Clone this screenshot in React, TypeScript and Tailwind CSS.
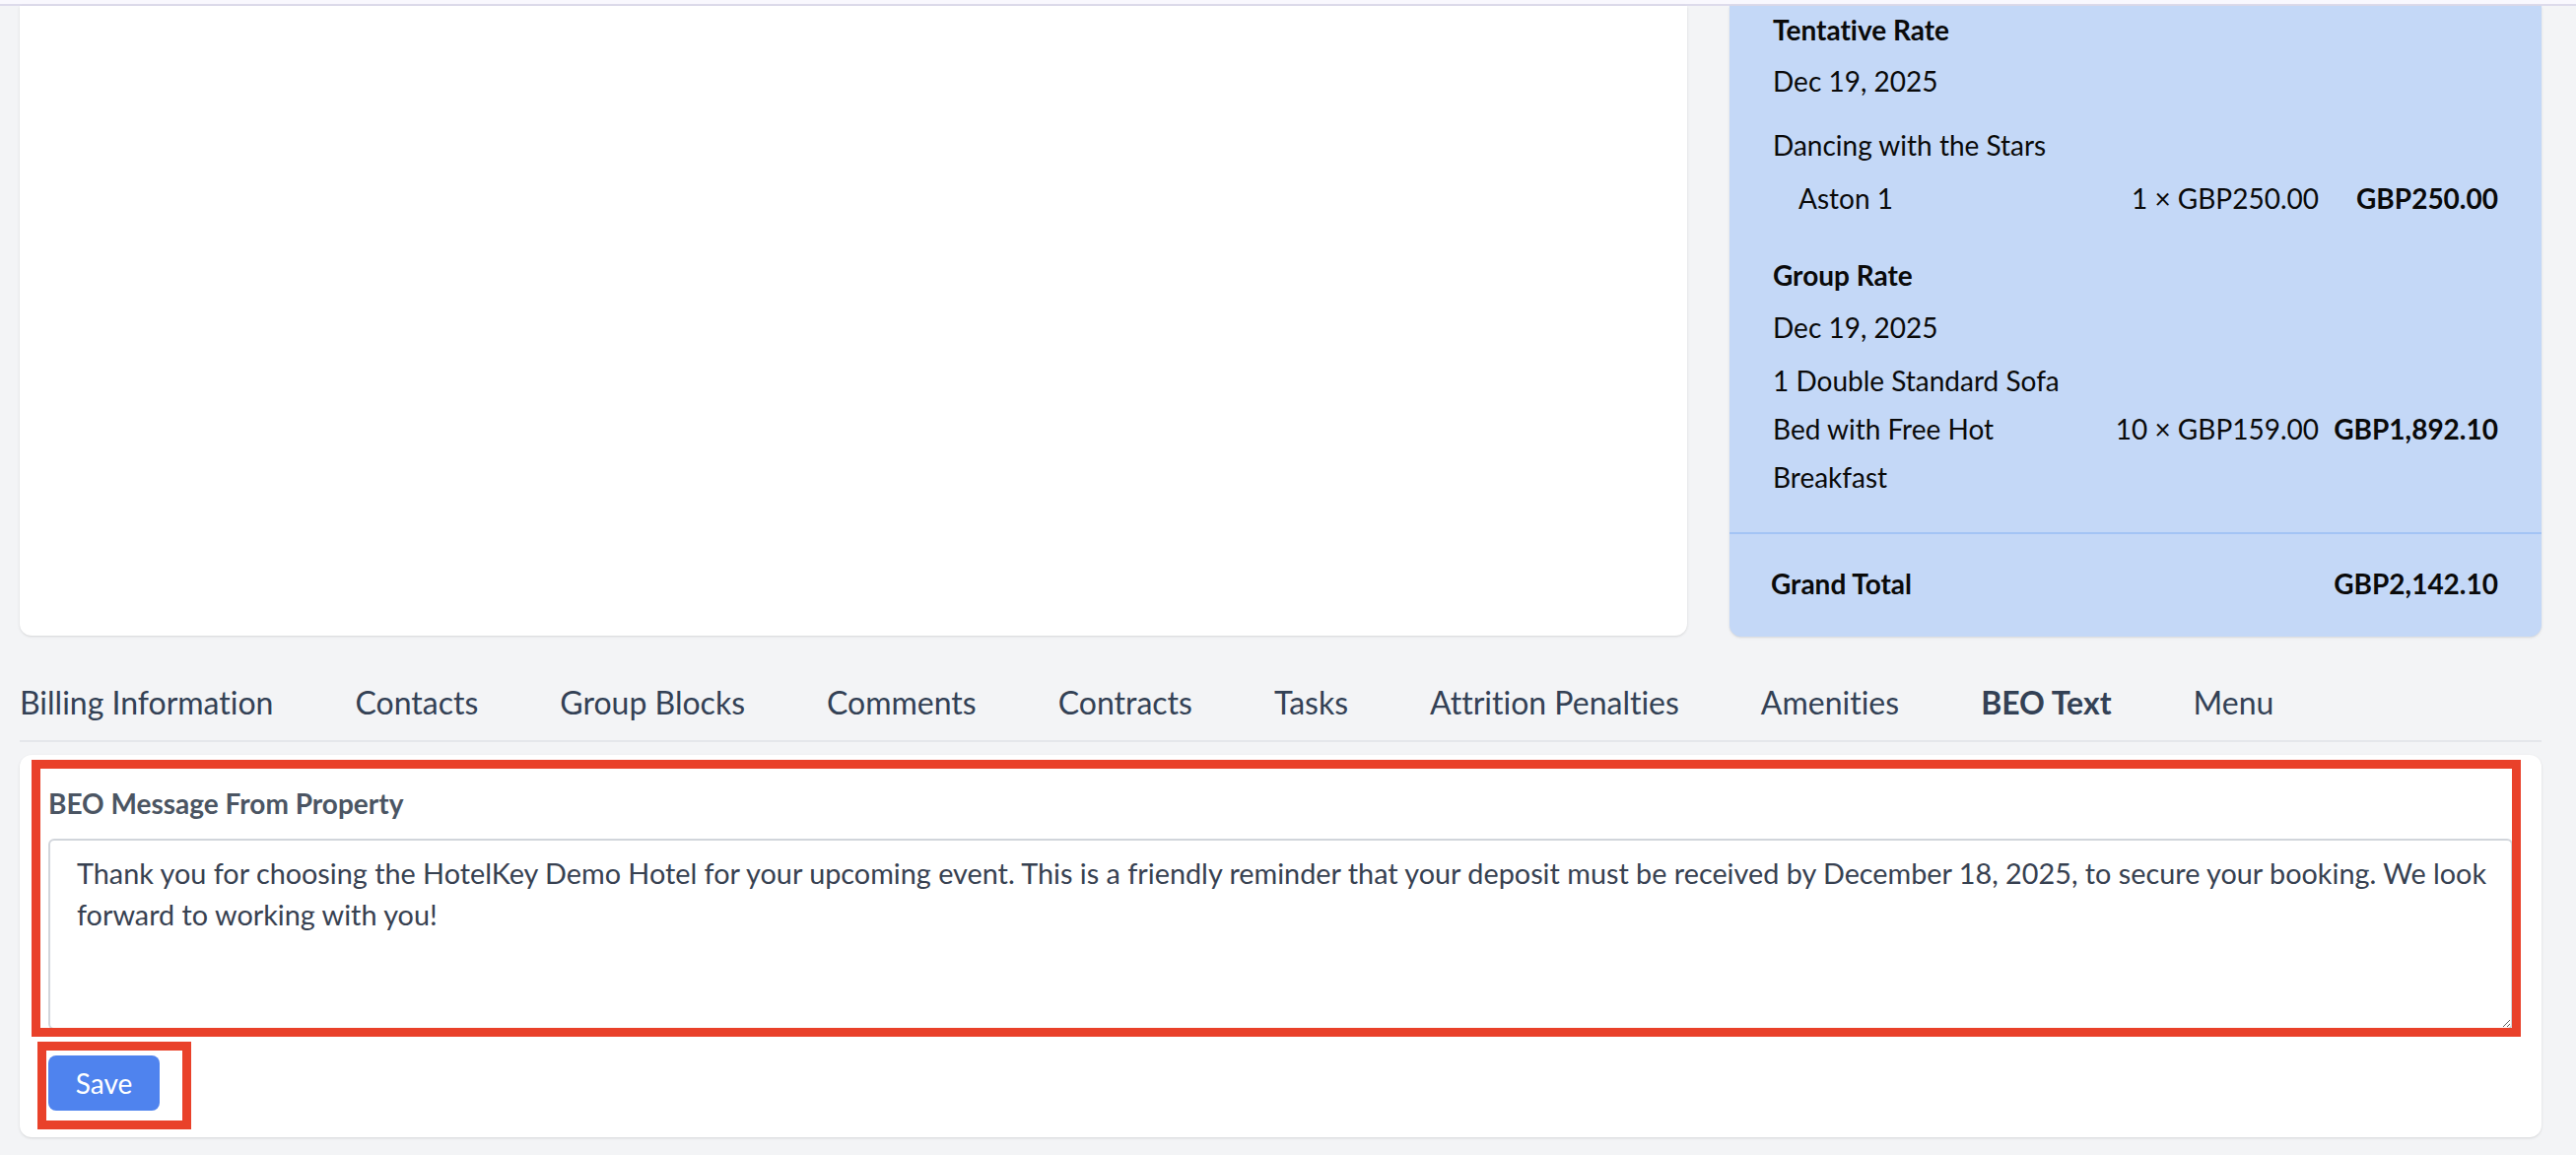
const tabs = [
  'Billing Information',
  'Contacts',
  'Group Blocks',
  'Comments',
  'Contracts',
  'Tasks',
  'Attrition Penalties',
  'Amenities',
  'BEO Text',
  'Menu',
]

const message =
  'Thank you for choosing the HotelKey Demo Hotel for your upcoming event. This is a friendly reminder that your deposit must be received by December 18, 2025, to secure your booking. We look forward to working with you!'

function RateRow({ name, qty, total, indent }: { name: string; qty: string; total: string; indent?: boolean }) {
  return (
    <div className="flex items-center">
      <div className={indent ? 'w-[330px] pl-[26px]' : 'w-[330px]'}>{name}</div>
      <div className="flex-1 text-right">{qty}</div>
      <div className="w-[167px] ml-[15px] text-right font-bold">{total}</div>
    </div>
  )
}

function SummaryPanel() {
  return (
    <aside className="w-[824px] bg-[#c4d8f7] rounded-b-[12px] shadow-sm text-[#0a0a0a] text-[28px] leading-[49px]">
      <div className="px-[44px] pb-[31px]">
        <div className="font-bold mb-[3px]">Tentative Rate</div>
        <div>Dec 19, 2025</div>
        <div className="mt-[16px]">Dancing with the Stars</div>
        <div className="mt-[5px]">
          <RateRow name="Aston 1" qty="1 × GBP250.00" total="GBP250.00" indent />
        </div>

        <div className="font-bold mt-[29px]">Group Rate</div>
        <div className="mt-[4px]">Dec 19, 2025</div>
        <div className="mt-[5px]">
          <RateRow
            name="1 Double Standard Sofa Bed with Free Hot Breakfast"
            qty="10 × GBP159.00"
            total="GBP1,892.10"
          />
        </div>
      </div>
      <div className="border-t-2 border-[#a3c4f5] px-[44px] pt-[26px] pb-[29px] flex justify-between font-bold">
        <span className="-ml-[2px]">Grand Total</span>
        <span>GBP2,142.10</span>
      </div>
    </aside>
  )
}

export default function App() {
  return (
    <div className="min-h-screen bg-[#f3f4f6] font-['Lato',_'Noto_Sans',_sans-serif] [font-variant-ligatures:no-common-ligatures]">
      <div className="h-[6px] bg-[#f9f8fe] border-b-2 border-[#dddbeb]" />

      <div className="pl-[20px] pr-[35px] pb-[17px]">
        <div className="flex gap-[43px] items-stretch">
          <div className="flex-1 bg-white rounded-b-[12px] shadow-sm mb-px" />
          <SummaryPanel />
        </div>

        <nav className="mt-[44px] flex gap-[83px] border-b-2 border-[#e5e7eb] pb-[16px] text-[32px] leading-[45px] text-[#334155]">
          {tabs.map((t) => (
            <span key={t} className={t === 'BEO Text' ? 'font-bold' : ''}>
              {t}
            </span>
          ))}
        </nav>

        <div className="relative mt-[13px] bg-white rounded-[12px] shadow-sm px-[29px] pt-[28px] pb-[27px]">
          <label className="block text-[28px] leading-[42px] font-bold text-[#4b5563] mb-[15px]">
            BEO Message From Property
          </label>
          <textarea
            defaultValue={message}
            className="block w-full h-[194px] border-2 border-[#d1d5db] rounded-[6px] pl-[27px] pr-[8px] pt-[12px] text-[28.8px] leading-[42px] text-[#374151] outline-none [font-variant-ligatures:no-common-ligatures]"
          />
          <button className="mt-[26px] w-[113px] h-[56px] rounded-[8px] bg-[#4f83ee] text-white text-[28px]">
            Save
          </button>

          {/* red annotation boxes from the screenshot */}
          <div className="absolute left-[12px] top-[5px] w-[2526px] h-[281px] border-[9px] border-[#e9412a] pointer-events-none" />
          <div className="absolute left-[18px] top-[291px] w-[156px] h-[89px] border-[9px] border-[#e9412a] pointer-events-none" />
        </div>
      </div>
    </div>
  )
}
